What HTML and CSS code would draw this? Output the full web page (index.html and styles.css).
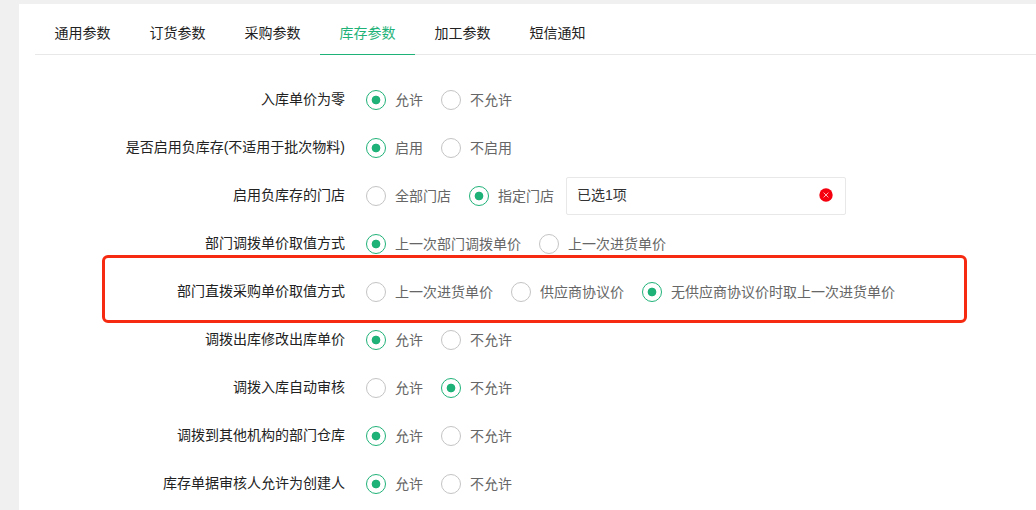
FILE: index.html
```html
<!DOCTYPE html>
<html lang="zh-CN">
  <head>
    <meta charset="UTF-8" />
    <title>库存参数</title>
    <link rel="stylesheet" href="styles.css">
  </head>
  <body>
    <div class="panel">
      <div class="tabs">
        <div class="tab">通用参数</div>
        <div class="tab">订货参数</div>
        <div class="tab">采购参数</div>
        <div class="tab active">库存参数</div>
        <div class="tab">加工参数</div>
        <div class="tab">短信通知</div>
      </div>

      <div class="form">
        <div class="row">
          <div class="label">入库单价为零</div>
          <div class="options">
            <span class="radio checked">允许</span>
            <span class="radio">不允许</span>
          </div>
        </div>
        <div class="row">
          <div class="label">是否启用负库存(不适用于批次物料)</div>
          <div class="options">
            <span class="radio checked">启用</span>
            <span class="radio">不启用</span>
          </div>
        </div>
        <div class="row">
          <div class="label">启用负库存的门店</div>
          <div class="options">
            <span class="radio">全部门店</span>
            <span class="radio checked">指定门店</span>
            <div class="picker">
              <span class="picker-text">已选1项</span>
              <svg class="clear" width="14" height="14" viewBox="0 0 14 14">
                <circle cx="7" cy="7" r="6.7" fill="#f5000f" />
                <path d="M4.6 4.6l4.8 4.8M9.4 4.6l-4.8 4.8" stroke="#ffc8c8" stroke-width="0.9" fill="none" />
              </svg>
            </div>
          </div>
        </div>
        <div class="row">
          <div class="label">部门调拨单价取值方式</div>
          <div class="options">
            <span class="radio checked">上一次部门调拨单价</span>
            <span class="radio">上一次进货单价</span>
          </div>
        </div>
        <div class="row">
          <div class="label">部门直拨采购单价取值方式</div>
          <div class="options">
            <span class="radio">上一次进货单价</span>
            <span class="radio">供应商协议价</span>
            <span class="radio checked">无供应商协议价时取上一次进货单价</span>
          </div>
          <div class="highlight"></div>
        </div>
        <div class="row">
          <div class="label">调拨出库修改出库单价</div>
          <div class="options">
            <span class="radio checked">允许</span>
            <span class="radio">不允许</span>
          </div>
        </div>
        <div class="row">
          <div class="label">调拨入库自动审核</div>
          <div class="options">
            <span class="radio">允许</span>
            <span class="radio checked">不允许</span>
          </div>
        </div>
        <div class="row">
          <div class="label">调拨到其他机构的部门仓库</div>
          <div class="options">
            <span class="radio checked">允许</span>
            <span class="radio">不允许</span>
          </div>
        </div>
        <div class="row">
          <div class="label">库存单据审核人允许为创建人</div>
          <div class="options">
            <span class="radio checked">允许</span>
            <span class="radio">不允许</span>
          </div>
        </div>
      </div>
    </div>
  </body>
</html>
```

FILE: styles.css
```css
* {
  margin: 0;
  padding: 0;
  box-sizing: border-box;
}

html,
body {
  height: 510px;
  overflow: hidden;
}

body {
  background-color: #f0f0f0;
  padding: 4px 0 0 19px;
  font-family: "Liberation Sans", "Noto Sans CJK SC", sans-serif;
  font-size: 14px;
  line-height: 20px;
}

.panel {
  background-color: #fff;
  height: 506px;
  padding: 0 0 0 16px;
}

.tabs {
  display: flex;
  height: 51px;
  border-bottom: 1px solid #e8e8e8;
}

.tab {
  width: 95px;
  height: 51px;
  line-height: 59px;
  text-align: center;
  color: #222;
}

.tab.active {
  color: #1fb278;
  border-bottom: 1px solid #1fb278;
}

.form {
  padding-top: 21px;
}

.row {
  display: flex;
  align-items: center;
  height: 48px;
  position: relative;
}

.label {
  width: 310px;
  padding-bottom: 2px;
  text-align: right;
  color: #222;
}

.options {
  display: flex;
  align-items: center;
  gap: 18px;
  padding-left: 21px;
}

.radio {
  display: flex;
  align-items: center;
  gap: 9px;
  color: #666;
}

.radio::before {
  content: "";
  box-sizing: border-box;
  width: 20px;
  height: 20px;
  border: 1.5px solid #c4c4c4;
  border-radius: 50%;
  flex-shrink: 0;
}

.radio.checked::before {
  border-color: #1fb278;
  background: radial-gradient(circle, #1fb278 0 4px, #fff 4.7px);
}

.picker {
  width: 280px;
  height: 38px;
  margin-left: -6px;
  padding: 0 12px 0 10px;
  border: 1px solid #e8e8e8;
  border-radius: 2px;
  display: flex;
  align-items: center;
  justify-content: space-between;
  color: #333;
}

.picker-text {
  padding-bottom: 2px;
}

.clear {
  margin-bottom: 2px;
}

/* red annotation drawn over the row */
.highlight {
  position: absolute;
  left: 67px;
  top: -13px;
  width: 865px;
  height: 68px;
  border: 3px solid #f52a10;
  border-radius: 6px;
}
```
